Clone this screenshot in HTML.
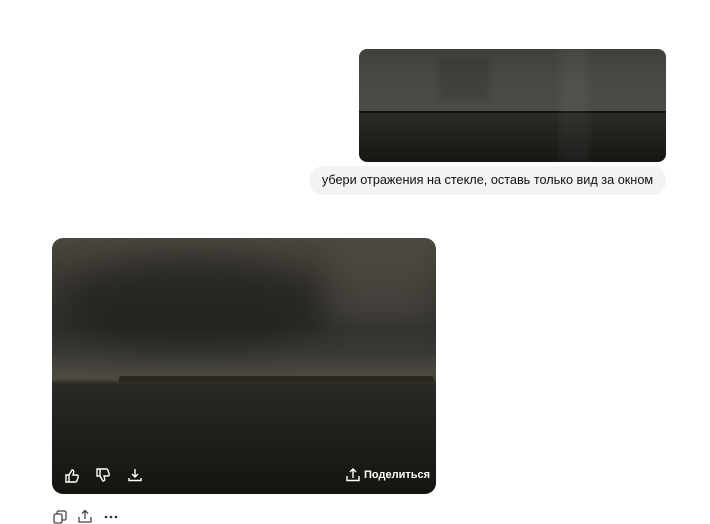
<!DOCTYPE html>
<html><head><meta charset="utf-8"><style>
body{margin:0;width:710px;height:523px;background:#fff;position:relative;overflow:hidden;font-family:"Liberation Sans",sans-serif}
.a{position:absolute}
#top{left:359px;top:49px;width:307px;height:113px;border-radius:8px;overflow:hidden;
background:linear-gradient(180deg,#3f403c 0%,#4a4944 30%,#4c4a45 55%,#2a2a27 57%,#22221f 75%,#161614 100%)}
#bub{left:309px;top:166px;width:357px;height:29px;border-radius:15px;background:#f3f3f3;font-size:12.7px;color:#111;line-height:29px;text-align:center}
#main{left:52px;top:238px;width:384px;height:256px;border-radius:11px;overflow:hidden;
background:linear-gradient(180deg,#4a4740 0%,#3d3a34 15%,#2f2e2b 35%,#3a3935 45%,#4a4740 52%,#4c4942 55%,#2b2925 57%,#24221e 70%,#151411 100%)}
</style></head><body>
<div class="a" id="top">
<div class="a" style="left:0;top:62px;width:307px;height:2px;background:#111"></div>
<div class="a" style="left:80px;top:10px;width:50px;height:40px;background:rgba(0,0,0,.12);filter:blur(3px)"></div>
<div class="a" style="left:200px;top:0;width:30px;height:113px;background:rgba(255,255,255,.04);filter:blur(3px)"></div>
</div>
<div class="a" id="bub">убери отражения на стекле, оставь только вид за окном</div>
<div class="a" id="main">
<div class="a" style="left:10px;top:20px;width:260px;height:90px;border-radius:50%;background:rgba(20,20,18,.45);filter:blur(16px)"></div>
<div class="a" style="left:280px;top:10px;width:100px;height:80px;background:rgba(120,115,105,.2);filter:blur(14px)"></div>
<div class="a" style="left:67px;top:138px;width:315px;height:6px;background:#2a2620;border-radius:3px 3px 0 0"></div>
<svg class="a" style="left:12px;top:230px" width="16" height="16" viewBox="0 0 16 16" fill="none" stroke="#fff" stroke-width="1.4"><path d="M2 7h3v7H2zM5 7l3-5c1.5 0 2 1 1.6 2.5L9 7h4c1 0 1.5 1 1.2 2l-1.4 4c-.3.7-.8 1-1.5 1H5"/></svg>
<svg class="a" style="left:43px;top:229px" width="16" height="16" viewBox="0 0 16 16" fill="none" stroke="#fff" stroke-width="1.4"><path d="M2 9h3V2H2zM5 9l3 5c1.5 0 2-1 1.6-2.5L9 9h4c1 0 1.5-1 1.2-2l-1.4-4C12.5 2.3 12 2 11.3 2H5"/></svg>
<svg class="a" style="left:75px;top:229px" width="16" height="16" viewBox="0 0 16 16" fill="none" stroke="#fff" stroke-width="1.4"><path d="M8 2v8M5 7l3 3 3-3M2 11v2.5h12V11"/></svg>
<svg class="a" style="left:293px;top:229px" width="16" height="16" viewBox="0 0 16 16" fill="none" stroke="#fff" stroke-width="1.4"><path d="M8 11V2M5 5l3-3 3 3M2 9v4.5h12V9"/></svg>
<div class="a" style="left:312px;top:231px;font-weight:bold;font-size:11px;color:#fff">Поделиться</div>
</div>
<svg class="a" style="left:53px;top:510px" width="14" height="14" viewBox="0 0 14 14" fill="none" stroke="#444" stroke-width="1.3"><rect x="1" y="4" width="8" height="9" rx="1.5"/><path d="M4 4V2.5C4 1.7 4.7 1 5.5 1h6C12.3 1 13 1.7 13 2.5v6c0 .8-.7 1.5-1.5 1.5H9"/></svg>
<svg class="a" style="left:78px;top:509px" width="14" height="14" viewBox="0 0 14 14" fill="none" stroke="#444" stroke-width="1.3"><path d="M7 10V1.5M4 4.5l3-3 3 3M1 8v5h12V8"/></svg>
<svg class="a" style="left:104px;top:515px" width="14" height="4"><circle cx="2" cy="2" r="1.3" fill="#333"/><circle cx="7" cy="2" r="1.3" fill="#333"/><circle cx="12" cy="2" r="1.3" fill="#333"/></svg>
</body></html>
